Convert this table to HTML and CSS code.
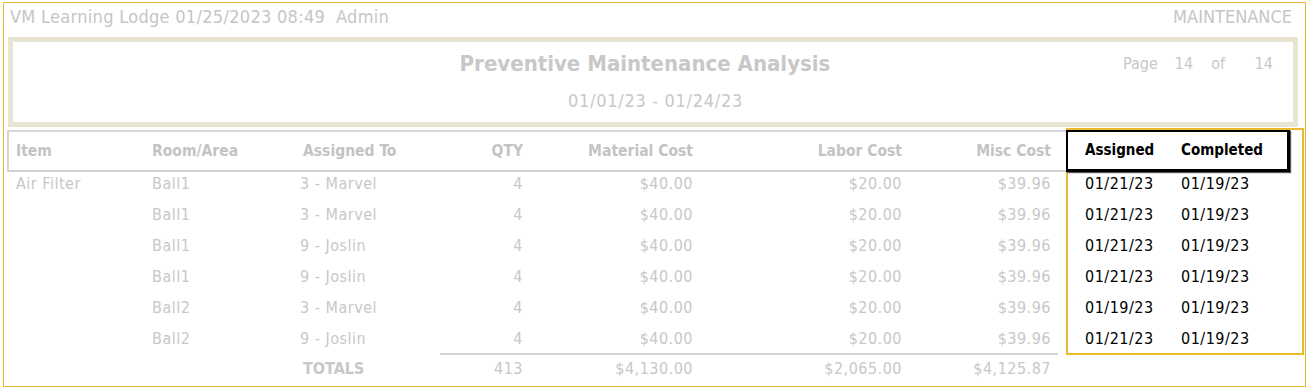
FILE: index.html
```html
<!DOCTYPE html>
<html>
<head>
<meta charset="utf-8">
<title>Preventive Maintenance Analysis</title>
<link rel="stylesheet" href="styles.css">
</head>
<body>
<div class="frame">
  <div class="topbar">
    <span class="who">VM Learning Lodge 01/25/2023 08:49&nbsp;&nbsp;Admin</span>
    <span>MAINTENANCE</span>
  </div>
  <div class="titlebox">
    <div class="spacer"></div>
    <div class="titles">
      <div class="title">Preventive Maintenance Analysis</div>
      <div class="range">01/01/23 - 01/24/23</div>
    </div>
    <div class="page">
      <span class="pg">Page</span><span class="pn">14</span><span class="po">of</span><span class="pt">14</span>
    </div>
  </div>
  <div class="report">
    <div class="main">
      <div class="row head">
        <span>Item</span><span>Room/Area</span><span>Assigned To</span>
        <span class="r">QTY</span><span class="r">Material Cost</span><span class="r">Labor Cost</span><span class="r">Misc Cost</span>
      </div>
      <div class="row">
        <span>Air Filter</span><span>Ball1</span><span>3 - Marvel</span>
        <span class="r">4</span><span class="r">$40.00</span><span class="r">$20.00</span><span class="r">$39.96</span>
      </div>
      <div class="row">
        <span></span><span>Ball1</span><span>3 - Marvel</span>
        <span class="r">4</span><span class="r">$40.00</span><span class="r">$20.00</span><span class="r">$39.96</span>
      </div>
      <div class="row">
        <span></span><span>Ball1</span><span>9 - Joslin</span>
        <span class="r">4</span><span class="r">$40.00</span><span class="r">$20.00</span><span class="r">$39.96</span>
      </div>
      <div class="row">
        <span></span><span>Ball1</span><span>9 - Joslin</span>
        <span class="r">4</span><span class="r">$40.00</span><span class="r">$20.00</span><span class="r">$39.96</span>
      </div>
      <div class="row">
        <span></span><span>Ball2</span><span>3 - Marvel</span>
        <span class="r">4</span><span class="r">$40.00</span><span class="r">$20.00</span><span class="r">$39.96</span>
      </div>
      <div class="row last">
        <span></span><span>Ball2</span><span>9 - Joslin</span>
        <span class="r">4</span><span class="r">$40.00</span><span class="r">$20.00</span><span class="r">$39.96</span>
      </div>
      <div class="row totals">
        <span></span><span></span><span class="b">TOTALS</span>
        <span class="r">413</span><span class="r">$4,130.00</span><span class="r">$2,065.00</span><span class="r">$4,125.87</span>
      </div>
    </div>
    <div class="dates">
      <div class="dhead"><span>Assigned</span><span>Completed</span></div>
      <div class="drow"><span>01/21/23</span><span>01/19/23</span></div>
      <div class="drow"><span>01/21/23</span><span>01/19/23</span></div>
      <div class="drow"><span>01/21/23</span><span>01/19/23</span></div>
      <div class="drow"><span>01/21/23</span><span>01/19/23</span></div>
      <div class="drow"><span>01/19/23</span><span>01/19/23</span></div>
      <div class="drow last"><span>01/21/23</span><span>01/19/23</span></div>
    </div>
  </div>
</div>
</body>
</html>
```

FILE: styles.css
```css
* { box-sizing: border-box; }
html, body { margin: 0; padding: 0; background: #ffffff; }
body {
  font-family: "DejaVu Sans Condensed", "DejaVu Sans", sans-serif;
  font-size: 16px;
  color: #c8c8c8;
}
.frame {
  margin: 2px 0 0 3px;
  width: 1303px;
  height: 385px;
  border: 1px solid #eab92c;
}
.topbar {
  display: flex;
  justify-content: space-between;
  font-size: 18px;
  line-height: 28px;
  padding: 0 13px 0 6px;
  margin-bottom: 6px;
  color: #c6c6c6;
}
.who { letter-spacing: 0.3px; }
.titlebox {
  margin-left: 4px;
  width: 1290px;
  height: 90px;
  border: 5px solid #e8e6d3;
  display: grid;
  grid-template-columns: 1fr auto 1fr;
}
.titles { text-align: center; padding-top: 8px; }
.title {
  font-weight: bold;
  font-size: 22px;
  line-height: 28px;
  padding-right: 16px;
}
.range {
  margin-top: 11px;
  font-size: 18px;
  line-height: 24px;
  letter-spacing: 0.7px;
  padding-left: 5px;
}
.page {
  justify-self: end;
  padding: 10px 20px 0 0;
  line-height: 24px;
  display: flex;
}
.pn { margin-left: 17px; }
.po { margin-left: 18px; }
.pt { width: 48px; text-align: right; }
.report {
  display: flex;
  align-items: flex-start;
  margin-top: 1px;
}
.main {
  margin: 2px 0 0 3px;
  width: 1059px;
}
.row {
  display: grid;
  grid-template-columns: 136px 148px 123px 100px 170px 209px 149px;
  padding-left: 9px;
  line-height: 24px;
  height: 31px;
  white-space: nowrap;
  letter-spacing: 0.5px;
}
.row .r { text-align: right; }
.row.head {
  height: 42px;
  line-height: 38px;
  padding-left: 7px;
  border-top: 2px solid #d6d6d6;
  border-left: 2px solid #d6d6d6;
  border-bottom: 2px solid #d2d2d2;
  font-weight: bold;
  font-size: 15.5px;
  letter-spacing: 0;
  color: #c3c3c3;
  grid-template-columns: 136px 151px 120px 100px 170px 209px 149px;
}
.row.last { height: 26px; }
.row.totals {
  height: 28px;
  padding-top: 4px;
  background: linear-gradient(#d4d4d4, #d4d4d4) no-repeat 433px 0 / 618px 2px;
}
.b { font-weight: bold; letter-spacing: 0; padding-left: 3px; }
.dates {
  width: 238px;
  margin-right: -1px;
  border: 2px solid #eab92c;
  padding-right: 12px;
  color: #000;
}
.dhead {
  margin-left: -2px;
  height: 42px;
  border: 2px solid #000;
  border-right-width: 3px;
  border-bottom-width: 3px;
  box-shadow: 1px 1px 1px #555;
  font-weight: bold;
  font-size: 15px;
  line-height: 37px;
}
.dhead, .drow {
  display: grid;
  grid-template-columns: 96px auto;
  padding-left: 17px;
}
.drow { line-height: 24px; height: 31px; letter-spacing: 0.5px; }
.drow.last { height: 26px; }
```
